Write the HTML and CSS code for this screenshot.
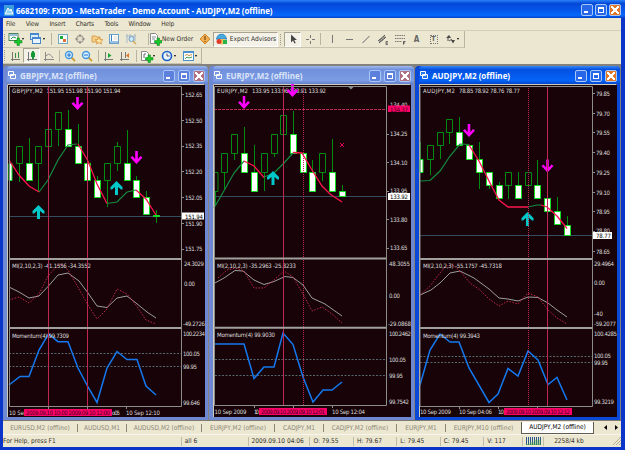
FILE: index.html
```html
<!DOCTYPE html>
<html lang="en">
<head>
    <meta charset="UTF-8">
    <title>6682109: FXDD - MetaTrader - Demo Account - AUDJPY,M2 (offline)</title>
    <link rel="stylesheet" href="styles.css">
</head>
<body>
    <!-- Shared shapes -->
    <svg class="defs" width="0" height="0">
        <defs>
            <path id="down" class="sell" d="M-1.300 0h2.600v8l2.700-3 2 1.500-6 6.500-6-6.500 2-1.500 2.700 3z"/>
            <path id="up" class="buy" d="M-1.500 14h3v-8l3 2.500h1.500v-2.500l-6-6-6 6v2.500h1.500l3-2.500z"/>
            <path id="plus" d="M10 7h2.500v2.500h2.500v2.500h-2.500v2.500h-2.500v-2.500h-2.500v-2.500h2.500z" fill="#18c828" stroke="#087818" stroke-width=".5"/>
        </defs>
    </svg>

    <div class="app">
        <div class="titlebar">
            <svg class="logo" width="10" height="11" viewBox="0 0 10 11"><rect width="10" height="11" fill="#3c9cdc"/><path d="M1 9l3-6 2 3 1-2 2 5z" fill="#8cd0f4" stroke="#fff"/></svg>
            <span class="app-name">6682109: FXDD - MetaTrader - Demo Account - AUDJPY,M2 (offline)</span>
            <div class="buttons">
                <i class="btn min"></i><i class="btn max"></i><i class="btn close"></i>
            </div>
        </div>

        <div class="body">
            <!-- Menu -->
            <div class="menu">
                <span>File</span><span>View</span><span>Insert</span><span>Charts</span><span>Tools</span><span>Window</span><span>Help</span>
            </div>

            <!-- Standard and line toolbars -->
            <div class="toolbar first">
                <i class="grip"></i>
                <span class="tool drop"><svg width="16" height="16" viewBox="0 0 16 16"><rect x="2" y="2.500" width="9" height="7" fill="#fff" stroke="#48845c"/><path d="M3 4h7" stroke="#3878b8"/><path d="M4 8l2-2 3 1" stroke="#28a048" fill="none"/><use href="#plus"/></svg></span>
                <span class="tool drop"><svg width="16" height="16" viewBox="0 0 16 16"><rect x="2.500" y="2.500" width="8" height="6" fill="#d8ecfc" stroke="#4888c8"/><rect x="4.500" y="6.500" width="8" height="6" fill="#e8f4ff" stroke="#4888c8"/><path d="M3 3.500h7M5 7.500h7" stroke="#4888d8"/></svg></span>
                <i class="sep"></i>
                <span class="tool"><svg width="16" height="16" viewBox="0 0 16 16"><rect x="3.500" y="3.500" width="9" height="9" fill="#f4fcff" stroke="#78a8c0"/><path d="M5 5h3v3h-3z" fill="#18a838"/><path d="M8 8h3v3h-3z" fill="#e07038"/></svg></span>
                <span class="tool"><svg width="16" height="16" viewBox="0 0 16 16"><circle cx="8" cy="8" r="3.500" fill="none" stroke="#888880"/><path d="M8 3v3.500M8 9.500v3.500M3 8h3.500M9.500 8h3.500" stroke="#888880"/></svg></span>
                <span class="tool"><svg width="16" height="16" viewBox="0 0 16 16"><path d="M3 5h4l1 1h3v5h-8z" fill="#f4d088" stroke="#d8a050"/><path d="M10 6l1 2.500 3 .2-2.200 1.800.7 2.500-2.500-1.300-2.500 1.300.7-2.500-2.200-1.800 3-.2z" fill="#ffe8a0" stroke="#d89040" stroke-width=".8"/></svg></span>
                <span class="tool"><svg width="16" height="16" viewBox="0 0 16 16"><rect x="3.500" y="3.500" width="9" height="9" fill="#fff" stroke="#68a0c8"/><path d="M5.500 4v6M4 11h8" stroke="#3880c0"/><path d="M7.500 6h4M7.500 8h4" stroke="#e0d8c8"/></svg></span>
                <span class="tool"><svg width="16" height="16" viewBox="0 0 16 16"><path d="M4 3v9M7 3v4M12 3v7M3 5h10" stroke="#a8b8c8"/><circle cx="8.500" cy="8" r="2.500" fill="#d0e8f8" stroke="#70a0c8"/><path d="M10 10l3 3" stroke="#d0a858" stroke-width="1.500"/></svg></span>
                <i class="sep wide"></i>
                <span class="tool order"><svg width="13" height="16" viewBox="2 0 13 16"><path d="M3.500 2.500h5l2 2v8h-7z" fill="#fff" stroke="#888"/><path d="M5 6h4M5 8h3" stroke="#889"/><use href="#plus"/></svg>New Order</span>
                <span class="tool"><svg width="16" height="16" viewBox="0 0 16 16"><path d="M8 3l5 5-5 5-5-5z" fill="#f4b050" stroke="#d08828"/><path d="M8 5v4M8 10v1" stroke="#805018" stroke-width="1.300"/></svg></span>
                <span class="tool pressed experts"><svg width="14" height="14" viewBox="0 0 14 14"><path d="M2 6c0-5 9-5 9 0l1 1h-11z" fill="#48a8e0" stroke="#3088c0"/><path d="M4 7h6v3l-3 3-3-2z" fill="#f0c060"/><circle cx="4" cy="9.500" r="2.500" fill="#e03c28"/><path d="M8 8h4v4h-4z" fill="#28b448"/></svg>Expert Advisors</span>
                <i class="grip"></i>
                <span class="tool pressed"><svg width="16" height="16" viewBox="0 0 16 16"><path d="M6 3.500v8l2-2 1.500 3 1.200-.6-1.500-2.900h2.800z" fill="#444"/></svg></span>
                <span class="tool"><svg width="16" height="16" viewBox="0 0 16 16"><path d="M8.500 4v3M8.500 10v3M4 8.500h3M10 8.500h3" stroke="#777"/></svg></span>
                <i class="sep"></i>
                <span class="tool"><svg width="16" height="16" viewBox="0 0 16 16"><path d="M8.500 4v8" stroke="#777"/></svg></span>
                <span class="tool"><svg width="16" height="16" viewBox="0 0 16 16"><path d="M5 8.500h7" stroke="#777"/></svg></span>
                <span class="tool"><svg width="16" height="16" viewBox="0 0 16 16"><path d="M4.500 12l7-7" stroke="#666"/></svg></span>
                <span class="tool"><svg width="16" height="16" viewBox="0 0 16 16"><path d="M3 10l7-6M4 12l7-6M5 11v-3M7 10v-3M9 8v-3" stroke="#555"/><path d="M13 10.500h-2v3h2M11 12h2" stroke="#555" fill="none" stroke-width=".8"/></svg></span>
                <span class="tool"><svg width="16" height="16" viewBox="0 0 16 16"><path d="M3 4.500h10M3 7.500h10M3 10.500h7" stroke="#777" stroke-dasharray="1.500 .7"/><path d="M11.500 13.500v-3h2M11.500 12h1.500" stroke="#555" fill="none"/></svg></span>
                <span class="tool letter">A</span>
                <span class="tool letter"><b class="label">T</b></span>
                <span class="tool drop"><svg width="16" height="16" viewBox="0 0 16 16"><path d="M4 7l3-3 2 3zM9 9h4l-2 3.500z" fill="#444"/><path d="M6 6v4M7 10l3-2" stroke="#555"/></svg></span>
            </div>

            <div class="toolbar second">
                <i class="grip"></i>
                <span class="tool"><svg width="16" height="16" viewBox="0 0 16 16"><path d="M5.500 4v9M4 11.500h9" stroke="#777"/><path d="M8.500 5v5M11.500 4v6" stroke="#389048"/></svg></span>
                <span class="tool pressed"><svg width="16" height="16" viewBox="0 0 16 16"><path d="M4.500 4v9M3 11.500h10" stroke="#777"/><path d="M8 3h2v8h-2zM7 4.500h4v4.500h-4z" fill="#189838"/></svg></span>
                <span class="tool"><svg width="16" height="16" viewBox="0 0 16 16"><path d="M4.500 4v9M3 11.500h10M5 8c3-3 4-2 7 2" stroke="#888" fill="none"/></svg></span>
                <i class="sep"></i>
                <span class="tool"><svg width="16" height="16" viewBox="0 0 16 16"><path d="M9.500 9.500l3.500 3.500" stroke="#d0a038" stroke-width="2"/><circle cx="7" cy="7" r="3.500" fill="#d8f0ff" stroke="#4898e0" stroke-width="1.400"/><path d="M5 7h4M7 5v4" stroke="#2070c8"/></svg></span>
                <span class="tool"><svg width="16" height="16" viewBox="0 0 16 16"><path d="M9.500 9.500l3.500 3.500" stroke="#d0a038" stroke-width="2"/><circle cx="7" cy="7" r="3.500" fill="#d8f0ff" stroke="#4898e0" stroke-width="1.400"/><path d="M5 7h4" stroke="#2070c8"/></svg></span>
                <i class="sep"></i>
                <span class="tool"><svg width="16" height="16" viewBox="0 0 16 16"><path d="M5.500 4v9M4 11.500h9" stroke="#777"/><path d="M8 5l3.500 2.500-3.500 2.500z" fill="#18a838"/></svg></span>
                <span class="tool"><svg width="16" height="16" viewBox="0 0 16 16"><path d="M4.500 4v9M3 11.500h9M8.500 4v6" stroke="#777"/><path d="M12 5l-3 2.500 3 2.500z" fill="#e07828"/></svg></span>
                <i class="sep"></i>
                <span class="tool drop"><svg width="16" height="16" viewBox="0 0 16 16"><path d="M3.500 3.500h5l2 2v7h-7z" fill="#fff" stroke="#888"/><path d="M6 10v-4h2" stroke="#666" fill="none"/><use href="#plus"/></svg></span>
                <span class="tool drop"><svg width="16" height="16" viewBox="0 0 16 16"><circle cx="8" cy="8" r="4.500" fill="#e8f4ff" stroke="#1860c8" stroke-width="1.600"/><path d="M8 5.500v2.500h2.500" stroke="#555" fill="none"/></svg></span>
                <span class="tool drop"><svg width="16" height="16" viewBox="0 0 16 16"><rect x="3.500" y="3.500" width="10" height="9" fill="#fff" stroke="#4890c8"/><path d="M3 4.500h11" stroke="#4890d8"/><path d="M5 7.500l2-1 2 1 3-1" stroke="#d09040" fill="none"/><path d="M5 11l2-2 2 1 3-1" stroke="#38a050" fill="none"/></svg></span>
            </div>

            <!-- Chart windows -->
            <div class="workspace">
                <div class="window">
                    <div class="caption">
                        <svg width="9" height="9" viewBox="0 0 9 9"><path d="M.5.500h5v4h-5zM2.500 3.500h5v4h-5z" fill="#7898e0" stroke="#fff"/></svg>
                        <span>GBPJPY,M2 (offline)</span>
                        <i class="btn min"></i><i class="btn max"></i><i class="btn close"></i>
                    </div>
                    <svg class="chart" width="198" height="333" viewBox="7 84 198 333">
                        <path class="bevel" d="M7.500 417v-332.500h197"/>
                        <path class="price" d="M9 216.500h173"/>
                        <path class="level" d="M9 353.500h172M9 366.500h172"/>
                        <path class="wick" d="M9.500 139v24M19.500 163v19M29.500 138v25M38.500 163v29M58.500 129v17M68.500 110v19M78.500 124v22M97.500 176v5M107.500 181v26M117.500 142v4M117.500 163v8M127.500 130v33M136.500 176v5M146.500 191v7M156.500 210v13"/>
                        <path class="hollow" d="M16.500 146.500h6v17h-6zM35.500 146.500h6v17h-6zM45.500 129.500h6v17h-6zM55.500 112.500h6v17h-6zM104.500 163.500h6v17h-6zM114.500 146.500h6v17h-6z"/>
                        <path class="solid" d="M9 163.500h3v17h-3zM26.500 163.500h6v17h-6zM65.500 129.500h6v17h-6zM75.500 146.500h6v17h-6zM84.500 163.500h6v17h-6zM94.500 180.500h6v17h-6zM124.500 163.500h6v17h-6zM133.500 180.500h6v17h-6zM143.500 197.500h6v17h-6zM153.500 215.500h6v1h-6z"/>
                        <path class="rise" d="M39 192L48 180 58 160 68 145 77 144M107 203.500L117 202 127 192 136 190"/>
                        <path class="fall" d="M9 160L19 175 29 186 39 192M78 144L88 161 97 184 107 203.500M136 190L146 199 156 215"/>
                        <path class="main" d="M9 287L19 292 29 298 39 296 48.500 286 58 275 68 273 79 281 88 293 97 306 107 307.500 117 298 127 296 136 303 147 312 156 318"/>
                        <path class="signal" d="M9 300L19 297 29 303 39 294 48 276 58 265 62 264 68 270 79 289 88 305 97 319 107 309 117 289 127 294 136 305 146 320 156 324"/>
                        <path class="momentum" d="M9 385L20 376.500H29L39 350 48.500 334 58 341.700H68L78 368 88 387 97 402.500 107 368 117 351.500 127 359.500H137L146 386 156 395"/>
                        <use href="#down" x="77.500" y="97"/><use href="#down" x="136.500" y="151"/>
                        <use href="#up" x="38.500" y="205"/><use href="#up" x="116.500" y="181"/>
                        <g class="text">
                            <text x="12" y="93" textLength="31">GBPJPY,M2</text><text x="46.500" y="93" textLength="74">151.95 151.98 151.90 151.94</text>
                            <text x="12" y="268" textLength="79">MI(2,10,2,3) -41.1556 -34.3552</text>
                            <text x="12" y="338" textLength="57">Momentum(4) 99.7309</text>
                        </g>
                        <path class="cross" d="M48.500 86v320M87.500 86v320"/>
                        <path class="split" d="M9 259h173M9 328h173"/>
                        <path class="frame" d="M9.500 406.500v-320h172v320zM48.500 407v2M87.500 407v2M126.500 407v2M182 94.500h2M182 120.500h2M182 146.500h2M182 171.500h2M182 197.500h2M182 223.500h2M182 249.500h2"/>
                        <g class="text">
                            <text x="185" y="97" textLength="17.500">152.65</text><text x="185" y="122.500" textLength="17.500">152.50</text><text x="185" y="148" textLength="17.500">152.35</text><text x="185" y="174" textLength="17.500">152.20</text><text x="185" y="199.500" textLength="17.500">152.05</text><text x="185" y="225.500" textLength="17.500">151.90</text><text x="185" y="251" textLength="17.500">151.75</text>
                            <text x="184" y="266" textLength="20">24.3029</text><text x="184" y="286" textLength="11">0.00</text><text x="183" y="326" textLength="22">-49.2726</text>
                            <text x="183" y="336" textLength="22">100.2234</text><text x="183" y="355.500" textLength="17">100.05</text><text x="183" y="368.500" textLength="14">99.95</text><text x="183" y="405" textLength="17">99.646</text>
                            <text x="9" y="414.500" textLength="15">10 Se</text><text x="112" y="414.500" textLength="8">o05</text><text x="126" y="414.500" textLength="34">10 Sep 12:10</text>
                        </g>
                        <path class="now" d="M182 212.500h22v7h-22z"/><text class="mark" x="185" y="218.500" textLength="18">151.94</text>
                        <path class="hot" d="M24 409h88v7h-88z"/><text class="mark" x="26" y="414.800" textLength="84">2009.09.10 10:00   2009.09.10 12:00</text>
                    </svg>
                </div>

                <div class="window">
                    <div class="caption">
                        <svg width="9" height="9" viewBox="0 0 9 9"><path d="M.5.500h5v4h-5zM2.500 3.500h5v4h-5z" fill="#7898e0" stroke="#fff"/></svg>
                        <span>EURJPY,M2 (offline)</span>
                        <i class="btn min"></i><i class="btn max"></i><i class="btn close"></i>
                    </div>
                    <svg class="chart" width="198" height="333" viewBox="213 84 198 333">
                        <path class="bevel" d="M213.500 417v-332.500h197"/>
                        <path class="price" d="M214 196.500h173"/>
                        <path class="level" d="M215 359.500h172M215 375.500h172"/>
                        <path class="wick" d="M215.500 191v14M224.500 172v17M234.500 153v7M244.500 127v26M254.500 145v27M264.500 172v19M274.500 153v4M293.500 111v23M312.500 160v12M322.500 172v9M332.500 139v33M342.500 185v6"/>
                        <path class="hollow" d="M215 172.500h3v19h-3M221.500 153.500h6v19h-6zM231.500 134.500h6v19h-6zM261.500 153.500h6v19h-6zM271.500 134.500h6v19h-6zM280.500 115.500h6v19h-6zM319.500 153.500h6v19h-6z"/>
                        <path class="solid" d="M241.500 153.500h6v19h-6zM251.500 172.500h6v19h-6zM290.500 134.500h6v19h-6zM300.500 153.500h6v19h-6zM309.500 172.500h6v19h-6zM329.500 172.500h6v19h-6zM339.500 191.500h6v5h-6z"/>
                        <path class="rise" d="M214 208L225 189 234 173 244 161M264 177L274 173 284 163 293 153"/>
                        <path class="fall" d="M244 161L254 166 264 177.500M293 152.500L302 153 312 170 322 186 330 194 342 202"/>
                        <path class="main" d="M214 283.500L224 278 235 270.500 243 271 254 280 264 284.500 274 281.500 285 276.500 293 277.500 303 285 312 298 325 304 342 316"/>
                        <path class="signal" d="M218 278L227 270 236 268 244 271 254 288H264L274 280 284 271 293 277 303 294 312 311 322 307 332 314 342 323"/>
                        <path class="momentum" d="M214 344H244L254 378.500 264 367H274L283 333 293 344.500 303 377 313 402 323 390H332L342 382"/>
                        <g class="text">
                            <text x="217" y="93" textLength="31">EURJPY,M2</text><text x="252" y="93" textLength="74">133.95 133.96 133.91 133.92</text>
                            <text x="217" y="267.500" textLength="79">MI(2,10,2,3) -35.2963 -25.8233</text>
                            <text x="217" y="337" textLength="58">Momentum(4) 99.9030</text>
                        </g>
                        <use href="#down" x="244" y="96"/><use href="#down" x="292.500" y="84"/>
                        <use href="#up" x="273" y="171"/>
                        <path class="stop" d="M340 143l4 4M344 143l-4 4"/>
                        <path class="shift" d="M348 86.500h6l-3 3z"/>
                        <path class="cross" d="M283.500 86v320"/>
                        <path class="cross dots" d="M303.500 86v320"/>
                        <path class="cross dash" d="M214 109.500h173"/>
                        <path class="split" d="M214 258.500h173M214 327.800h173"/>
                        <path class="frame" d="M214.500 405.500v-319h172v319zM254.500 406v2M293.500 406v2M332.500 406v2M387 134.500h2M387 162.500h2M387 191.500h2M387 219.500h2M387 248.500h2"/>
                        <g class="text">
                            <text x="390" y="106.500" textLength="17.500">134.40</text><text x="390" y="136" textLength="17.500">134.25</text><text x="390" y="164.500" textLength="17.500">134.10</text><text x="390" y="193" textLength="17.500">133.95</text><text x="390" y="221.500" textLength="17.500">133.80</text><text x="390" y="250" textLength="17.500">133.65</text>
                            <text x="389" y="265.500" textLength="21">48.3055</text><text x="389" y="297.500" textLength="11">0.00</text><text x="388" y="326" textLength="23">-29.0868</text>
                            <text x="389" y="335.500" textLength="22">100.2462</text><text x="389" y="362" textLength="17">100.05</text><text x="389" y="377.500" textLength="14">99.95</text><text x="389" y="404" textLength="20">99.7542</text>
                            <text x="214.500" y="413.500" textLength="32">10 Sep 2009</text><text x="254" y="413.500" textLength="5">10</text><text x="332" y="413.500" textLength="33">10 Sep 12:04</text>
                        </g>
                        <path class="hot" d="M388 105.500h22v6.500h-22zM259 408h68v7h-68z"/><text class="mark" x="390" y="111.500" textLength="18">134.37</text><text class="mark" x="261" y="413.800" textLength="64">2009.09.10 2009.09.10 12:01</text>
                        <path class="now" d="M388 193h22v7h-22z"/><text class="mark" x="390" y="198.800" textLength="18">133.92</text>
                    </svg>
                </div>

                <div class="window active">
                    <div class="caption">
                        <svg width="9" height="9" viewBox="0 0 9 9"><path d="M.5.500h5v4h-5zM2.500 3.500h5v4h-5z" fill="#2878e8" stroke="#fff"/></svg>
                        <span>AUDJPY,M2 (offline)</span>
                        <i class="btn min"></i><i class="btn max"></i><i class="btn close"></i>
                    </div>
                    <svg class="chart" width="198" height="333" viewBox="419 84 198 333">
                        <path class="bevel" d="M419.500 417v-332.500h197"/>
                        <path class="price" d="M420 235.500h172"/>
                        <path class="level" d="M420 356.500h172M420 362.500h172"/>
                        <path class="wick" d="M420.500 142v17M430.500 159v16M440.500 145v14M449.500 132v12M459.500 117v15M479.500 142v47M489.500 185v4M499.500 182v4M508.500 185v14M518.500 172v14M537.500 160v26M557.500 197v15M567.500 216v9"/>
                        <path class="hollow" d="M427.500 145.500h6v14h-6zM437.500 132.500h6v13h-6zM446.500 119.500h6v13h-6zM505.500 172.500h6v13h-6zM525.500 172.500h6v13h-6z"/>
                        <path class="solid" d="M420 159.500h3v13h-3zM456.500 132.500h6v13h-6zM466.500 145.500h6v14h-6zM476.500 159.500h6v13h-6zM486.500 172.500h6v13h-6zM496.500 185.500h6v13h-6zM515.500 185.500h6v13h-6zM534.500 185.500h6v13h-6zM544.500 198.500h6v13h-6zM554.500 211.500h6v13h-6zM564.500 225.500h6v10h-6z"/>
                        <path class="rise" d="M420 181L430 180.500 440 171 450 156 460 144 469 144.500M528 207L537 205H541"/>
                        <path class="fall" d="M469 145L479 161 489 181 499 200 508 207H528M541 205L547 207 557 216 567 228.500"/>
                        <path class="main" d="M420 295L431 290 440 283 450 273 460 271 474 278 489 289 499 298 508 299 518 301 528 297 538 297.500 548 303 557 310 567 317"/>
                        <path class="signal" d="M420 295L430 286 440 273 446 266 453 265 460 271 470 283 480 290 489 299 499 306 508 301 518 304 528 293 538 297 548 310 557 318 567 324"/>
                        <path class="momentum" d="M420 385L430 350 440 334 450 342H459L469 368 489 402.500 498 394 508 368.500 518 376 528 351 538 360 548 384.500 557 377.500 567 400"/>
                        <use href="#down" x="469" y="124"/><use href="#down" x="547.500" y="159.500"/>
                        <use href="#up" x="527.500" y="212"/>
                        <g class="text">
                            <text x="423" y="93" textLength="32">AUDJPY,M2</text><text x="459" y="93" textLength="61">78.85 78.92 78.76 78.77</text>
                            <text x="423" y="268" textLength="79">MI(2,10,2,3) -55.1757 -45.7318</text>
                            <text x="423" y="338" textLength="57">Momentum(4) 99.3943</text>
                        </g>
                        <path class="cross" d="M547.500 86v320"/>
                        <path class="cross dots" d="M528.500 86v320"/>
                        <path class="split" d="M420 259h172M420 328h172"/>
                        <path class="frame" d="M420 406.500v-320h172.500v320zM459.500 407v2M498.500 407v2M537.500 407v2M593 93.500h2M593 113.500h2M593 132.500h2M593 152.500h2M593 172.500h2M593 192.500h2M593 211.500h2M593 231.500h2M593 251.500h2"/>
                        <g class="text">
                            <text x="596" y="95.500" textLength="14">79.85</text><text x="596" y="115.500" textLength="14">79.70</text><text x="596" y="135" textLength="14">79.55</text><text x="596" y="154.500" textLength="14">79.40</text><text x="596" y="174.500" textLength="14">79.25</text><text x="596" y="194.500" textLength="14">79.10</text><text x="596" y="213.500" textLength="14">78.95</text><text x="596" y="232.500" textLength="14">78.80</text><text x="596" y="253.500" textLength="14">78.65</text>
                            <text x="594" y="266" textLength="20">29.4964</text><text x="594" y="284.500" textLength="11">0.00</text><text x="594" y="315.500" textLength="9">-40</text><text x="594" y="326" textLength="22">-59.2077</text>
                            <text x="594" y="336" textLength="23">100.4285</text><text x="594" y="358" textLength="17">100.05</text><text x="594" y="364.500" textLength="14">99.95</text><text x="594" y="404" textLength="20">99.3219</text>
                            <text x="420" y="414" textLength="31">10 Sep 2009</text><text x="459" y="414" textLength="33">10 Sep 04:06</text><text x="498" y="414" textLength="6">10</text>
                        </g>
                        <path class="now" d="M593 232h19v7h-19z"/><text class="mark" x="596" y="237.800" textLength="15">78.77</text>
                        <path class="hot" d="M504 408h68v7h-68z"/><text class="mark" x="506" y="413.800" textLength="64">2009.09.10 2009.09.10 12:12</text>
                    </svg>
                </div>
            </div>

            <!-- Chart tabs -->
            <div class="tabs">
                <span class="tab long">EURUSD,M2 (offline)</span>
                <span class="tab">AUDUSD,M1</span>
                <span class="tab long">AUDUSD,M2 (offline)</span>
                <span class="tab mid">EURJPY,M2 (offline)</span>
                <span class="tab">CADJPY,M1</span>
                <span class="tab mid">CADJPY,M2 (offline)</span>
                <span class="tab">EURJPY,M1</span>
                <span class="tab long last">EURJPY,M10 (offline)</span>
                <span class="tab current">AUDJPY,M2 (offline)</span>
                <svg class="scroll" width="16" height="7" viewBox="0 0 16 7"><path d="M4 1v5l-3-2.500zM12 1v5l3-2.500z" fill="#000"/></svg>
            </div>

            <!-- Status bar -->
            <div class="status">
                <span class="help">For Help, press F1</span>
                <span class="profile">all 6</span>
                <span class="date">2009.09.10 04:06</span>
                <span class="ohlc">O: 79.55</span>
                <span class="ohlc">H: 79.67</span>
                <span class="ohlc">L: 79.45</span>
                <span class="ohlc">C: 79.45</span>
                <span class="volume">V: 117</span>
                <span class="signal-box"><svg width="15" height="8" viewBox="0 0 15 8"><path d="M.5 0v8M2.500 0v8M4.500 0v8M6.500 0v8M8.500 0v8M10.500 0v8M12.500 0v8M14.500 0v8" stroke="#285888"/><path d="M0 7.500h15M4 6h11M8 4h7" stroke="#48a848" opacity=".7"/></svg></span>
                <span class="traffic">2258/4 kb</span>
                <svg class="resize" width="8" height="8" viewBox="0 0 8 8"><path d="M0 8l8-8M3 8l5-5M6 8l2-2" stroke="#b8b098"/></svg>
            </div>
        </div>
    </div>
</body>
</html>
```
FILE: styles.css
```css
/* General Styles */
* {
    box-sizing: border-box;
}

body {
    margin: 0;
    font-family: "DejaVu Sans Condensed", "DejaVu Sans", sans-serif;
    font-stretch: condensed;
    font-size: 6.5px;
    color: #33312c;
    overflow: hidden;
}

svg {
    display: block;
    flex: none;
}

.defs {
    position: absolute;
}

.app {
    width: 625px;
    height: 450px;
    background: #0a35c8;
}

.body {
    margin: 0 4px 0 3px;
    background: #ece7d0;
}

/* Title bar */
.titlebar {
    display: flex;
    align-items: center;
    height: 18px;
    padding: 2px 4px 0 4px;
    background: linear-gradient(#2a80f8, #0448d8 20%, #0458ec 60%, #0468fc 85%, #0440c8);
}

.app-name,
.caption span {
    font-family: "Open Sans", sans-serif;
    font-stretch: normal;
    font-size: 8px;
    font-weight: 700;
    color: #fff;
    white-space: nowrap;
}

.app-name {
    margin-left: 2px;
    letter-spacing: -.08px;
}

.buttons {
    display: flex;
    gap: 2px;
    margin-left: auto;
}

.btn {
    display: flex;
    flex: none;
    width: 12px;
    height: 12px;
    border: 1px solid #a8c8f8;
    border-radius: 2px;
    background: #2868e8;
}

.btn::before {
    content: "";
    margin: 2px;
    flex: 1;
}

.btn.min::before {
    margin: 6px 4px 2px 2px;
    background: #fff;
}

.btn.max::before {
    border: 1px solid #fff;
    border-top-width: 2px;
}

.btn.close {
    background: #e07828;
}

.btn.close::before {
    margin: 1px;
    background: linear-gradient(45deg, transparent 43%, #fff 43%, #fff 57%, transparent 57%), linear-gradient(-45deg, transparent 43%, #fff 43%, #fff 57%, transparent 57%);
}

/* Menu and toolbars */
.menu {
    display: flex;
    align-items: center;
    gap: 10.5px;
    height: 13px;
    padding-left: 3px;
    border-bottom: 1px solid #d4cfbc;
    font-size: 6.5px;
    letter-spacing: -.15px;
}

.toolbar {
    display: flex;
    align-items: center;
    border-right: 1px solid #b8b4a0;
    border-bottom: 1px solid #c8c4b0;
}

.toolbar.first {
    width: 462px;
    height: 17px;
}

.toolbar.second {
    width: 199px;
    height: 16px;
}

.grip {
    width: 2px;
    height: 11px;
    margin: 0 1px;
    border-left: 1px dotted #a09c88;
}

.toolbar.first .grip ~ .grip {
    margin: 0 2px;
}

.sep {
    width: 1px;
    height: 12px;
    margin: 0 2px;
    background: #b8b4a0;
}

.sep.wide {
    margin: 0 0 0 9px;
}

.tool {
    display: flex;
    flex: none;
    align-items: center;
    justify-content: center;
    width: 17px;
    height: 15px;
    white-space: nowrap;
}

.drop {
    width: 21px;
    justify-content: flex-start;
}

.drop::after {
    content: "";
    border: 1.5px solid transparent;
    border-top: 2px solid #000;
    border-bottom: 0;
    margin-left: -1px;
}

.pressed {
    border: 1px solid #fff;
    border-top-color: #a8a490;
    border-left-color: #a8a490;
    background: #f4f2e8;
}

.order {
    width: 47px;
    justify-content: flex-start;
    font-size: 6.5px;
}

.experts {
    width: 65px;
    gap: 1px;
    font-size: 6.6px;
}

.letter {
    font-size: 8px;
    font-weight: bold;
    color: #666;
}

.label {
    width: 8px;
    border: 1px dotted #777;
    font-size: 7px;
    line-height: 7px;
    text-align: center;
}

/* Workspace */
.workspace {
    display: flex;
    gap: 1px;
    height: 356px;
    padding-top: 2px;
    background: #84827c;
}

.window {
    width: 205px;
    height: 354px;
    border: solid #6f88d4;
    border-width: 0 3px 3px 4px;
    border-radius: 4px 4px 0 0;
    background: #6f88d4;
}

.window.active {
    border-color: #0a48d8;
    background: #0a48d8;
}

.caption {
    display: flex;
    align-items: center;
    gap: 3px;
    height: 18px;
    margin-right: -3px;
    padding: 1px 3px 0 1px;
    border-radius: 4px 4px 0 0;
    background: linear-gradient(#a0b8ec, #7090dc 20%, #7c9ce4 80%, #6880cc);
}

.active .caption {
    background: linear-gradient(#3888f8, #0450e0 20%, #0464f8 80%, #0444cc);
}

.caption span {
    margin: 0 auto 0 0;
    color: #dce4f8;
}

.active .caption span {
    color: #fff;
}

.window .btn {
    background: #5c80dc;
}

.window .btn.close {
    background: #b07080;
}

.window.active .btn {
    background: #2868e8;
}

.window.active .btn.close {
    background: #e07828;
}

/* Charts */
.chart {
    background: #180408;
}

.chart path {
    fill: none;
}

.chart .bevel {
    stroke: #d0ccbc;
}

.chart .price {
    stroke: #344c60;
}

.chart .level {
    stroke: #54686c;
    stroke-dasharray: 2 1.5;
}

.chart .wick,
.chart .hollow {
    stroke: #008c10;
}

.chart .hollow {
    fill: #180408;
}

.chart .solid {
    fill: #fff;
    stroke: #10e020;
}

.chart .rise {
    stroke: #148c40;
    stroke-width: 1.2;
}

.chart .fall {
    stroke: #f8144c;
    stroke-width: 1.3;
}

.chart .main {
    stroke: #9c9c9c;
}

.chart .signal {
    stroke: #c02448;
    stroke-dasharray: 1.5 1.5;
}

.chart .momentum {
    stroke: #1478f0;
    stroke-width: 1.5;
}

.chart .cross {
    stroke: #c02854;
}

.chart .dots {
    stroke-dasharray: 1 1;
}

.chart .dash {
    stroke-dasharray: 3 1;
}

.chart .split {
    stroke: #a0a09c;
    stroke-width: 2;
}

.chart .frame {
    stroke: #8c8c88;
}

.chart .stop {
    stroke: #e00058;
}

.chart .shift {
    fill: #889098;
}

.chart .now {
    fill: #fff;
}

.chart .hot {
    fill: #ff0068;
}

.sell {
    fill: #ff00ff;
}

.buy {
    fill: #00c8c8;
}

.text,
.mark {
    font-size: 6px;
    fill: #dcdcdc;
}

.mark {
    fill: #000;
}

.hot ~ .mark {
    fill: #400018;
}

.now + .mark {
    fill: #000;
}

/* Tabs */
.tabs {
    display: flex;
    align-items: center;
    height: 14px;
    border-top: 1px solid #807c70;
    color: #8c8878;
}

.tab {
    display: flex;
    flex: none;
    align-items: center;
    justify-content: center;
    width: 49px;
    height: 8px;
    border-right: 1px solid #8c8878;
    white-space: nowrap;
}

.tab.long {
    width: 75px;
}

.tab.mid {
    width: 73px;
}

.tab.last {
    border-right: 0;
}

.tab.current {
    width: 73px;
    height: 12px;
    border: 1px solid #605c50;
    border-top: 0;
    background: #fff;
    color: #000;
}

.scroll {
    margin-left: 9px;
}

/* Status bar */
.status {
    display: flex;
    align-items: center;
    height: 13px;
    border-top: 1px solid #f8f6ec;
}

.status span {
    height: 9px;
    line-height: 9px;
    padding-left: 3px;
    border-left: 1px solid #c0bca8;
    white-space: nowrap;
}

.status .help {
    width: 178px;
    padding-left: 0;
    border-left: 0;
}

.status .profile {
    width: 67px;
}

.status .date {
    width: 62px;
}

.status .ohlc {
    width: 43.5px;
}

.status .volume {
    width: 39px;
}

.status .signal-box {
    width: 21px;
}

.status .traffic {
    padding-left: 10px;
    width: 70px;
}

.resize {
    margin-left: auto;
}
```
